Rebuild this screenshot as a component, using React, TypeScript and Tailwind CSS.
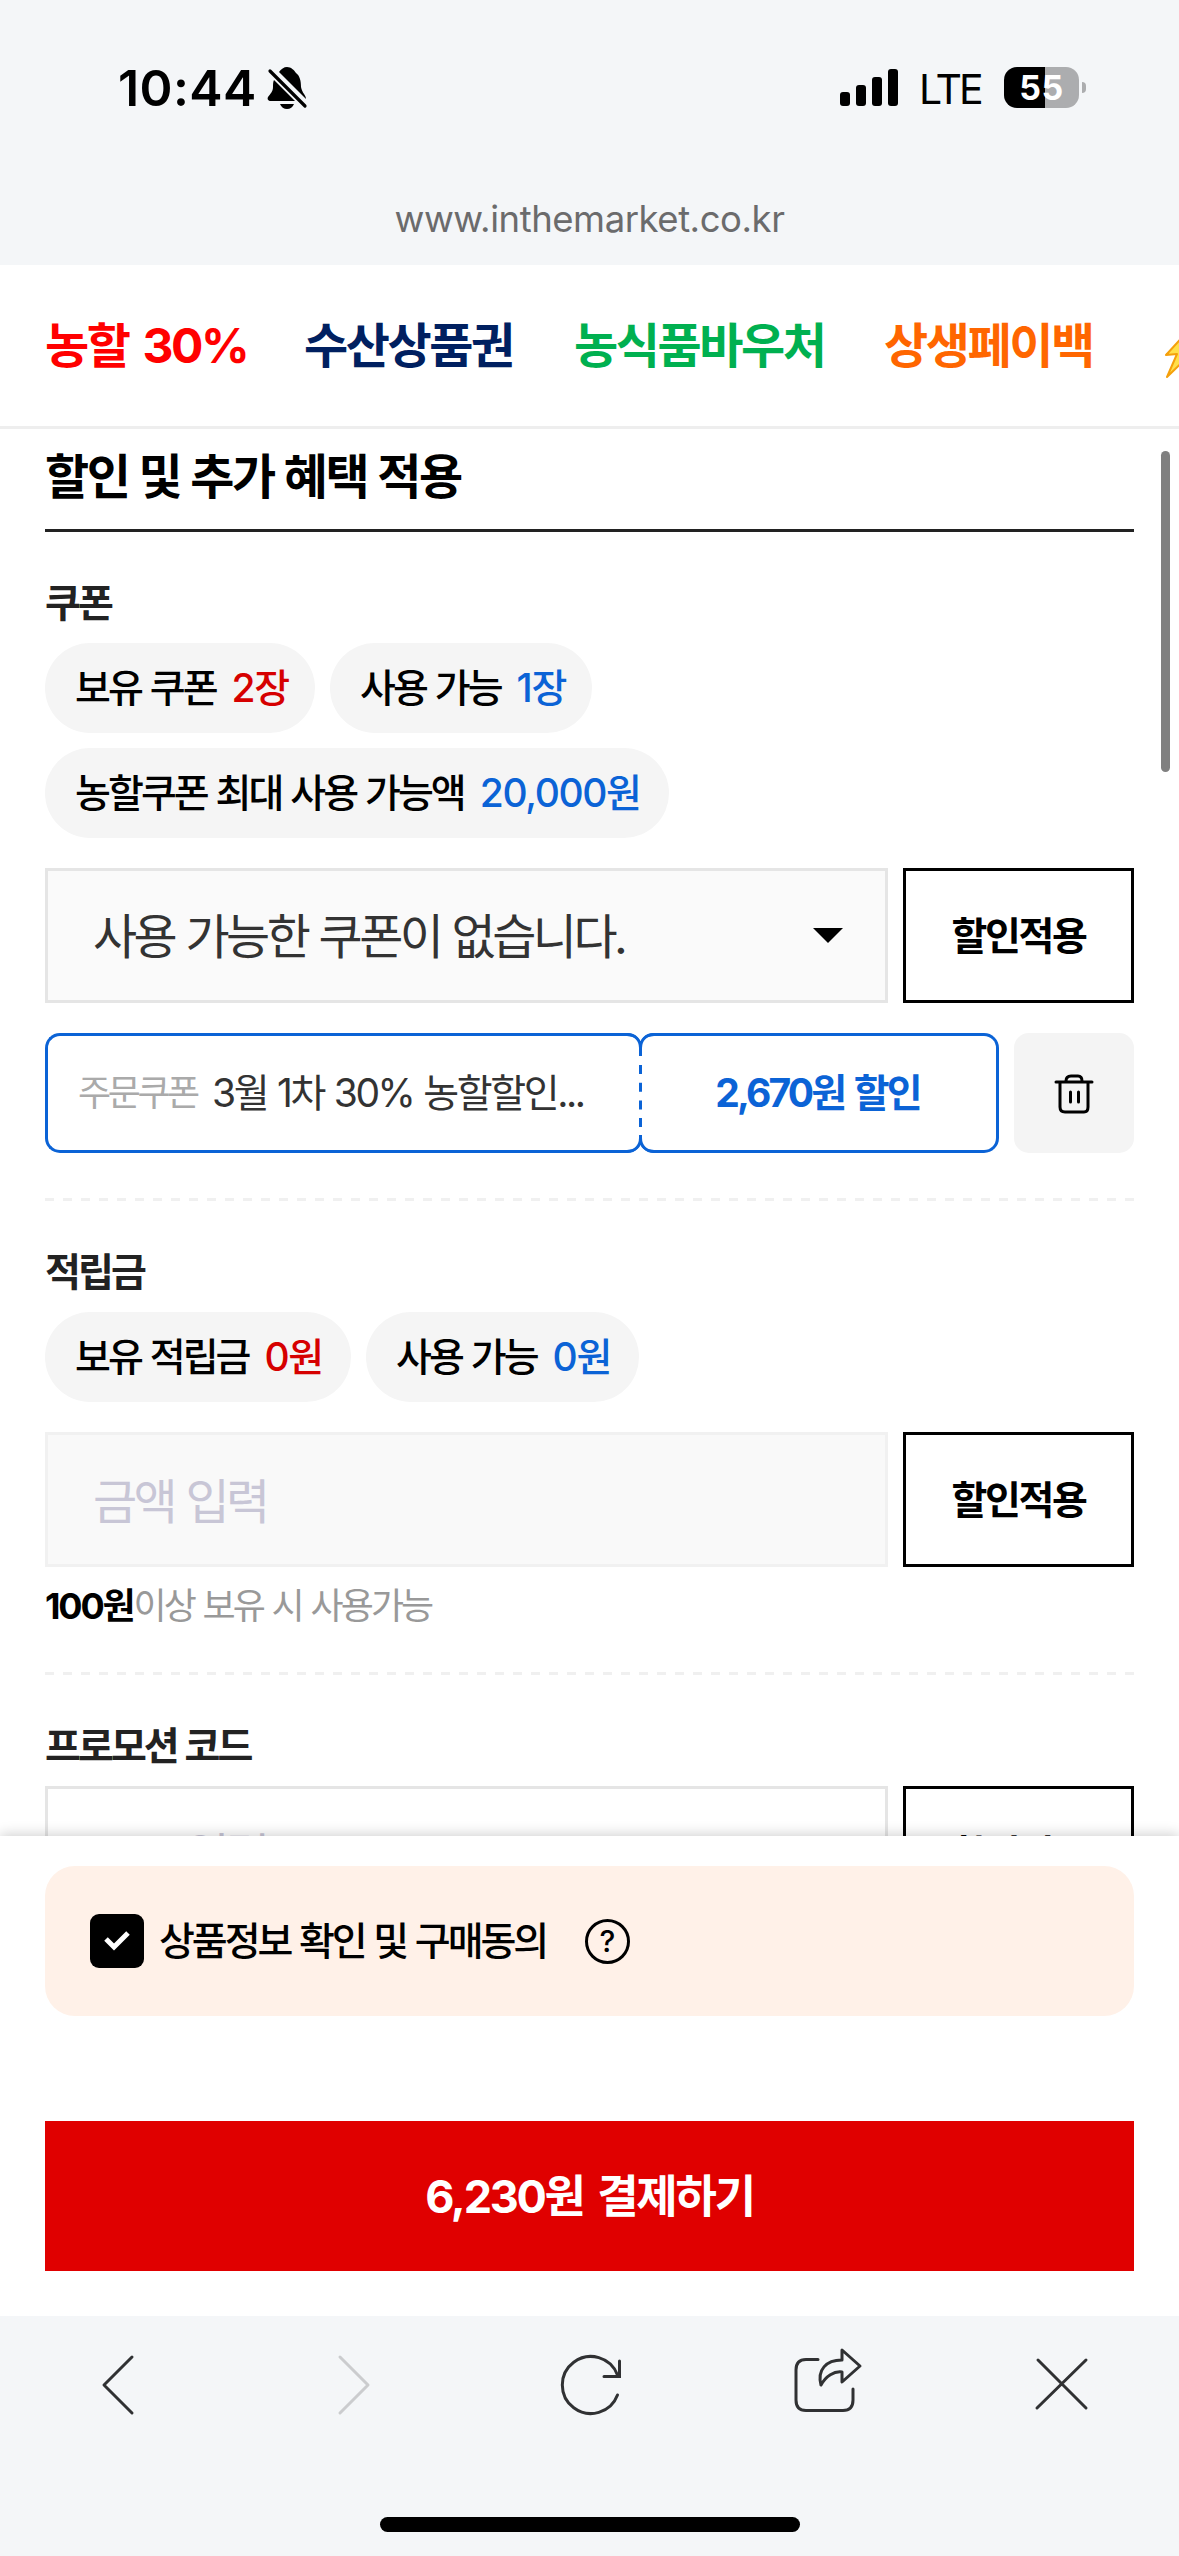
import type { ReactNode } from 'react'

const TABS = [
  { label: '농할 30%', color: 'text-[#ff0000]', width: 'w-[259px]' },
  { label: '수산상품권', color: 'text-[#002060]', width: 'w-[270px]' },
  { label: '농식품바우처', color: 'text-[#00b050]', width: 'w-[310px]' },
  { label: '상생페이백', color: 'text-[#ff6600]', width: 'w-[280px]' },
]

function StatusBar() {
  return (
    <div className="flex h-[176px] items-start pt-[66px]">
      <span className="ml-[118px] w-[149px] text-[50px] leading-[44px] font-semibold tracking-[0.4px]">10:44</span>
      <svg className="h-[44px] w-[42px] shrink-0" viewBox="0 0 42 44">
        <path d="M12 6C14 3 17 1 20 1C24 1 27 4 29 7C33 10 34 15 34 21C35 27 39 29 39 33L12 6Z" fill="#000" />
        <path d="M7 14L28 35H4C1 35 0 33 1 31C3 28 6 26 6 21C6 18 6 16 7 14Z" fill="#000" />
        <path d="M13 38H27C26 41 23 43 20 43C17 43 14 41 13 38Z" fill="#000" />
        <path d="M3 5L38 40" stroke="#000" strokeWidth="3.2" strokeLinecap="round" />
      </svg>
      <div className="ml-[531px] flex h-[40px] items-end gap-[6px]">
        <i className="h-[14px] w-[10px] rounded-[3px] bg-black" />
        <i className="h-[21px] w-[10px] rounded-[3px] bg-black" />
        <i className="h-[29px] w-[10px] rounded-[3px] bg-black" />
        <i className="h-[37px] w-[10px] rounded-[3px] bg-black" />
      </div>
      <span className="ml-[21px] w-[85px] text-[41px] leading-[47px] tracking-[-2.8px]">LTE</span>
      <div className="mt-[1px] flex h-[41px] w-[75px] items-center justify-center rounded-[13px] bg-linear-to-r from-black from-[55%] to-[#acadaf] to-[55%] text-[34px] leading-none font-bold tracking-[0.5px] text-white">
        55
      </div>
      <i className="mt-[16px] ml-[3px] h-[11px] w-[4px] rounded-r-full bg-[#acadaf]" />
    </div>
  )
}

function SectionTitle({ children }: { children: ReactNode }) {
  return <h3 className="h-[48px] text-[39px] leading-[46px] font-bold tracking-[-0.075em] text-[#222]">{children}</h3>
}

function Pill({ label, value, width, blue }: { label: string; value: string; width: string; blue?: boolean }) {
  return (
    <div className={`flex h-[90px] items-center gap-[16px] rounded-full bg-[#f5f5f5] pl-[30px] text-[39px] font-medium whitespace-nowrap ${width}`}>
      <span className="tracking-[-0.075em]">{label}</span>
      <span className={`tracking-[-0.035em] ${blue ? 'text-[#0b63d6]' : 'text-[#d60000]'}`}>{value}</span>
    </div>
  )
}

function ApplyButton() {
  return (
    <button className="h-[135px] w-[231px] shrink-0 border-[3px] border-black bg-white pt-[2px] text-[39px] font-bold tracking-[-0.06em]">
      할인적용
    </button>
  )
}

function Dashes() {
  return <div className="h-[3px] bg-[repeating-linear-gradient(90deg,#f0f0f0_0_9px,transparent_9px_18px)]" />
}

function Coupon() {
  return (
    <div className="flex h-[120px]">
      <div className="flex w-[597px] items-center rounded-[15px] border-[3px] border-r-0 border-[#0b63d6] pl-[30px] whitespace-nowrap">
        <span className="w-[134px] text-[36px] tracking-[-0.095em] text-[#aaa]">주문쿠폰</span>
        <span className="text-[39px] tracking-[-0.062em] text-[#333]">3월 1차 30% 농할할인...</span>
      </div>
      <div className="relative -ml-[3px] flex w-[360px] items-center justify-center rounded-[15px] border-[3px] border-l-0 border-[#0b63d6] text-[39px] font-bold tracking-[-0.072em] text-[#0b63d6] [word-spacing:3px]">
        2,670원 할인
        {/* perforated edge between the two halves */}
        <svg className="absolute -top-[3px] -left-[12px] h-[120px] w-[27px]" viewBox="0 0 27 120" fill="none" stroke="#0b63d6" strokeWidth="3">
          <path d="M0 1.5C8 1.5 13.5 7 13.5 15V23M27 1.5C19 1.5 13.5 7 13.5 15" />
          <path d="M0 118.5C8 118.5 13.5 113 13.5 105V102M27 118.5C19 118.5 13.5 113 13.5 105" />
          <path d="M13.5 32V102" strokeDasharray="9 8.7" />
        </svg>
      </div>
      <button className="ml-[15px] flex w-[120px] items-center justify-center rounded-[15px] bg-[#f4f4f4]">
        <svg className="h-[42px] w-[42px]" viewBox="0 0 42 42" fill="none" stroke="#000" strokeWidth="3" strokeLinecap="round">
          <path d="M3 10H39M7 10V35Q7 40 12 40H31Q35 40 35 35V10" />
          <path d="M13 9Q13 4 18 4H25Q29 4 29 9M17.500 20V30M25.500 20V30" />
        </svg>
      </button>
    </div>
  )
}

export default function App() {
  return (
    <div className="flex h-[2556px] w-[1179px] flex-col overflow-hidden bg-white font-[Inter,'Noto_Sans_CJK_KR',sans-serif] text-black">
      <header className="h-[265px] shrink-0 bg-[#f4f6f8]">
        <StatusBar />
        <p className="pt-[19px] text-center text-[36.5px] leading-[48px] tracking-[-0.45px] text-[#6b6b6c]">www.inthemarket.co.kr</p>
      </header>

      <nav className="flex h-[164px] shrink-0 items-center overflow-hidden border-b-[3px] border-[#eee] pl-[45px] text-[48px] font-bold tracking-[-0.05em] whitespace-nowrap [word-spacing:5px]">
        {TABS.map((tab) => (
          <span key={tab.label} className={`shrink-0 ${tab.color} ${tab.width}`}>{tab.label}</span>
        ))}
        <svg className="mt-[16px] h-[50px] w-[36px] shrink-0" viewBox="0 0 36 50">
          <path d="M24 2L2 26L13 25L3 48L34 18L22 21L30 2Z" fill="#ffe04a" stroke="#f5a00c" strokeWidth="2" strokeLinejoin="round" />
        </svg>
      </nav>

      <main className="relative h-[1407px] shrink-0 overflow-hidden px-[45px] [word-spacing:1.3px]">
        <h2 className="h-[103px] border-b-[3px] border-[#222] pt-[18px] text-[48px] leading-[60px] font-bold tracking-[-0.052em]">
          할인 및 추가 혜택 적용
        </h2>

        <section className="pt-[48px]">
          <SectionTitle>쿠폰</SectionTitle>
          <div className="mt-[15px] flex flex-wrap gap-[15px]">
            <Pill label="보유 쿠폰" value="2장" width="w-[270px]" />
            <Pill label="사용 가능" value="1장" width="w-[262px]" blue />
            <Pill label="농할쿠폰 최대 사용 가능액" value="20,000원" width="w-[624px]" blue />
          </div>
          <div className="mt-[30px] flex gap-[15px]">
            <div className="flex h-[135px] flex-1 items-center justify-between border-[3px] border-[#e5e5e5] bg-[#fafafa] pr-[42px] pl-[45px] text-[48px] tracking-[-0.074em] text-[#333]">
              <span className="pt-[3px]">사용 가능한 쿠폰이 없습니다.</span>
              <svg className="h-[15px] w-[30px]" viewBox="0 0 30 15">
                <path d="M0 0H30L15 15Z" fill="#000" />
              </svg>
            </div>
            <ApplyButton />
          </div>
          <div className="mt-[30px] mb-[45px]">
            <Coupon />
          </div>
          <Dashes />
        </section>

        <section className="pt-[48px]">
          <SectionTitle>적립금</SectionTitle>
          <div className="mt-[15px] flex gap-[15px]">
            <Pill label="보유 적립금" value="0원" width="w-[306px]" />
            <Pill label="사용 가능" value="0원" width="w-[273px]" blue />
          </div>
          <div className="mt-[30px] flex gap-[15px]">
            <div className="flex h-[135px] flex-1 items-center border-[3px] border-[#f1f1f1] bg-[#f9f9f9] pt-[4px] pl-[45px] text-[48px] tracking-[-0.074em] text-[#c8c6d6]">
              금액 입력
            </div>
            <ApplyButton />
          </div>
          <p className="mt-[15px] mb-[42px] h-[48px] text-[36px] leading-[48px] tracking-[-0.08em] text-[#999]">
            <b className="font-bold tracking-[-0.06em] text-black">100원</b>이상 보유 시 사용가능
          </p>
          <Dashes />
        </section>

        <section className="pt-[48px]">
          <SectionTitle>프로모션 코드</SectionTitle>
          <div className="mt-[15px] flex gap-[15px]">
            <div className="flex h-[135px] flex-1 items-center border-[3px] border-[#e5e5e5] pt-[4px] pl-[45px] text-[48px] tracking-[-0.074em] text-[#c8c6d6]">
              코드 입력
            </div>
            <ApplyButton />
          </div>
        </section>

        <i className="absolute top-[22px] right-[9px] h-[321px] w-[9px] rounded-full bg-[#808080]" />
      </main>

      <div className="relative h-[480px] shrink-0 bg-white px-[45px] pt-[30px] shadow-[0_-2px_12px_rgba(0,0,0,0.18)]">
        <div className="flex h-[150px] items-center rounded-[30px] bg-[#fff1e8] pl-[45px]">
          <span className="flex h-[54px] w-[54px] items-center justify-center rounded-[9px] bg-black">
            <svg className="h-[24px] w-[28px]" viewBox="0 0 28 24" fill="none" stroke="#fff" strokeWidth="5">
              <path d="M3 10L11 18L25 4" />
            </svg>
          </span>
          <span className="ml-[15px] w-[426px] text-[39px] font-medium tracking-[-0.078em] [word-spacing:1.3px]">상품정보 확인 및 구매동의</span>
          <span className="flex h-[45px] w-[45px] items-center justify-center rounded-full border-[3px] border-black text-[30px] font-medium">?</span>
        </div>
        <button className="mt-[105px] h-[150px] w-full bg-[#e00000] pt-[2px] text-[45px] font-bold tracking-[-0.05em] text-white [word-spacing:5px]">
          6,230원 결제하기
        </button>
      </div>

      <footer className="relative flex h-[240px] shrink-0 flex-col items-center bg-[#f4f6f8]">
        <div className="flex w-full justify-between px-[68px] pt-[18px]">
          <svg className="h-[100px] w-[100px]" viewBox="0 0 100 100" fill="none" stroke="#303133" strokeWidth="3" strokeLinecap="round" strokeLinejoin="round">
            <path d="M64 23L36 51L64 79" />
          </svg>
          <svg className="h-[100px] w-[100px]" viewBox="0 0 100 100" fill="none" stroke="#cbccce" strokeWidth="3" strokeLinecap="round" strokeLinejoin="round">
            <path d="M36 23L64 51L36 79" />
          </svg>
          <svg className="h-[100px] w-[100px]" viewBox="0 0 100 100" fill="none" stroke="#303133" strokeWidth="3" strokeLinecap="round">
            <path d="M77.500 61A28.500 28.500 0 1 1 77.500 41" />
            <path d="M79.500 27V42.500H64" strokeLinejoin="miter" />
          </svg>
          <svg className="h-[100px] w-[100px]" viewBox="0 0 100 100" fill="none" stroke="#303133" strokeWidth="3" strokeLinecap="round" strokeLinejoin="round">
            <path d="M43 25.500H31Q21 25.500 21 36V66Q21 76.500 31 76.500H68Q78 76.500 78 66V55" />
            <path d="M67 16L85 32L67 48V38C59 37 51 42 46 51C42 36 51 26 67 26Z" />
          </svg>
          <svg className="h-[100px] w-[100px]" viewBox="0 0 100 100" fill="none" stroke="#303133" strokeWidth="3" strokeLinecap="round">
            <path d="M27 26L75 74M75 26L26 74" />
          </svg>
        </div>
        <i className="mt-[83px] h-[15px] w-[420px] rounded-full bg-black" />
      </footer>
    </div>
  )
}
